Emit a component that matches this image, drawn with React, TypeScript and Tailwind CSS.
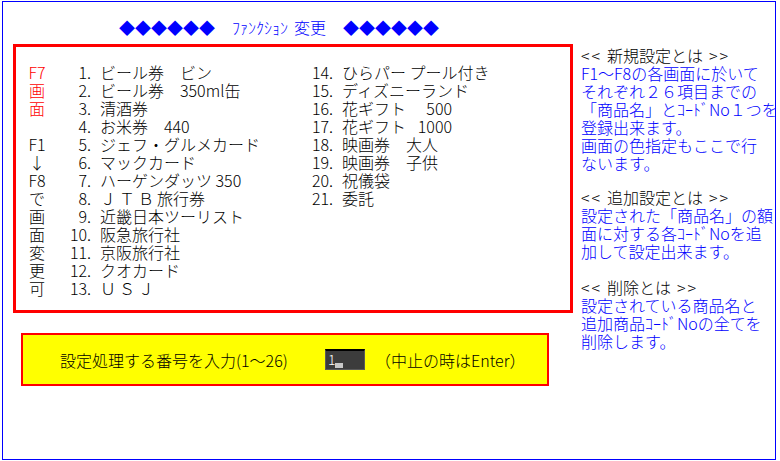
const labels = ["F7", "画", "面", "", "F1", "↓", "F8", "で", "画", "面", "変", "更", "可"];

const leftItems: [number, React.ReactNode][] = [
  [1, "ビール券　ビン"],
  [2, "ビール券　350ml缶"],
  [3, "清酒券"],
  [4, "お米券　440"],
  [5, "ジェフ・グルメカード"],
  [6, "マックカード"],
  [7, "ハーゲンダッツ 350"],
  [8, <><span className="tracking-[3px]">ＪＴＢ</span>旅行券</>],
  [9, "近畿日本ツーリスト"],
  [10, "阪急旅行社"],
  [11, "京阪旅行社"],
  [12, "クオカード"],
  [13, <span className="tracking-[3px]">ＵＳＪ</span>],
];

const rightItems: [number, React.ReactNode][] = [
  [14, "ひらパー プール付き"],
  [15, "ディズニーランド"],
  [16, <>花ギフト<span className="inline-block w-[46px] text-right">500</span></>],
  [17, <>花ギフト<span className="inline-block w-[46px] text-right">1000</span></>],
  [18, "映画券　大人"],
  [19, "映画券　子供"],
  [20, "祝儀袋"],
  [21, "委託"],
];

const helpBlocks = [
  {
    title: "新規設定とは",
    lines: [
      "F1～F8の各画面に於いて",
      "それぞれ２６項目までの",
      "「商品名」とｺｰﾄﾞNo１つを",
      "登録出来ます。",
      "画面の色指定もここで行",
      "ないます。",
    ],
    gap: "mt-0",
  },
  {
    title: "追加設定とは",
    lines: ["設定された「商品名」の額", "面に対する各ｺｰﾄﾞNoを追", "加して設定出来ます。"],
    gap: "mt-[16px]",
  },
  {
    title: "削除とは",
    lines: ["設定されている商品名と", "追加商品ｺｰﾄﾞNoの全てを", "削除します。"],
    gap: "mt-[18px]",
  },
];

function ItemRow({ n, text }: { n: number; text: React.ReactNode }) {
  return (
    <div className="flex h-[18px] items-center whitespace-nowrap">
      <span className="w-[42px] text-right">{n}</span>
      <span className="w-[13px]">.</span>
      <span>{text}</span>
    </div>
  );
}

export default function App() {
  return (
    <div className="h-[461px] w-[780px] bg-white pl-[2px] pt-[1px] font-['Noto_Sans_CJK_JP',sans-serif] text-[16px] font-light leading-[18px] text-black">
      <div className="h-[459px] w-[774px] border border-[#0000ff]">
        {/* title */}
        <div className="ml-[116px] mt-[16px] flex h-[18px] items-center text-[#0000ff]">
          <span className="w-[96px] whitespace-nowrap">◆◆◆◆◆◆</span>
          <span className="ml-[17px] flex w-[94px] whitespace-nowrap">
            <span>ﾌｧﾝｸｼｮﾝ</span>
            <span className="ml-[6px]">変更</span>
          </span>
          <span className="ml-[17px] w-[96px] whitespace-nowrap">◆◆◆◆◆◆</span>
        </div>

        <div className="mt-[8px] flex items-start">
          <div className="ml-[10px] flex flex-col">
            {/* menu list */}
            <div className="flex h-[269px] w-[560px] border-[3px] border-[#ff0000] pl-[13px] pt-[16px]">
              <div className="flex w-[16px] flex-col">
                {labels.map((l, i) => (
                  <div
                    key={i}
                    className={`flex h-[18px] items-center justify-center ${i < 3 ? "text-[#ff0000]" : ""}`}
                  >
                    {l}
                  </div>
                ))}
              </div>
              <div className="flex w-[242px] flex-col">
                {leftItems.map(([n, t]) => (
                  <ItemRow key={n} n={n} text={t} />
                ))}
              </div>
              <div className="flex flex-col">
                {rightItems.map(([n, t]) => (
                  <ItemRow key={n} n={n} text={t} />
                ))}
              </div>
            </div>

            {/* input prompt */}
            <div className="ml-[8px] mt-[20px] flex h-[53px] w-[528px] items-center border-2 border-[#ff0000] bg-[#ffff00] pl-[37px]">
              <span className="w-[265px] whitespace-nowrap">設定処理する番号を入力(1～26)</span>
              <div className="relative h-[21px] w-[40px] border border-t-2 border-[#5a5a5a] border-t-black bg-[#3c3c3c]">
                <span className="absolute left-[2px] top-[0px] text-[14px] leading-[17px] text-white">1</span>
                <span className="absolute bottom-[1px] left-[9px] h-[5px] w-[8px] bg-[#c8c8c8]" />
              </div>
              <span className="ml-[10px] whitespace-nowrap">（中止の時はEnter）</span>
            </div>
          </div>

          {/* help panel */}
          <div className="ml-[8px] mt-[2px] flex flex-col whitespace-nowrap">
            {helpBlocks.map((b) => (
              <div key={b.title} className={`flex flex-col ${b.gap}`}>
                <div className="flex h-[18px]">
                  <span className="w-[26px] tracking-[2px]">{"<<"}</span>
                  <span>{b.title}</span>
                  <span className="ml-[6px] tracking-[2px]">{">>"}</span>
                </div>
                {b.lines.map((line) => (
                  <div key={line} className="h-[18px] text-[#0000ff]">
                    {line}
                  </div>
                ))}
              </div>
            ))}
          </div>
        </div>
      </div>
    </div>
  );
}
